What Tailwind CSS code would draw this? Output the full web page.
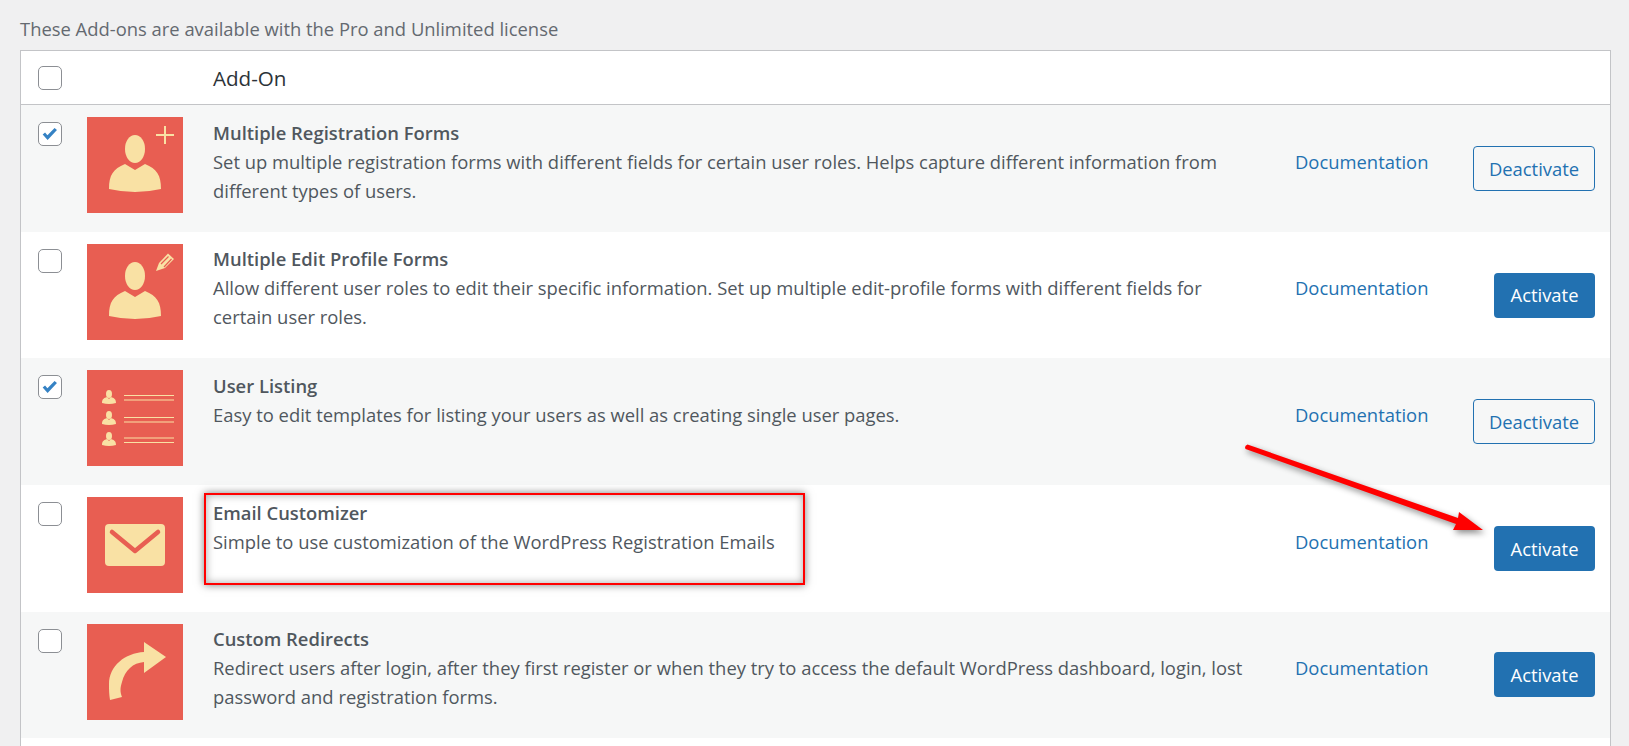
<!DOCTYPE html>
<html lang="en">
<head>
    <meta charset="UTF-8">
    <meta name="viewport" content="width=device-width, initial-scale=1.0">
    <title>Add-Ons</title>
    <script src="https://cdn.jsdelivr.net/npm/@tailwindcss/browser@4"></script>
</head>
<body class="relative h-[746px] overflow-hidden bg-[#f0f0f1] font-['Open_Sans','Noto_Sans',sans-serif] text-[18.4px] text-[#50575e]">
    <!-- Intro -->
    <p class="h-[50px] pl-[20px] pt-[16px] leading-[26px] text-[#646970]">These Add-ons are available with the Pro and Unlimited license</p>

    <!-- Add-ons table -->
    <div class="ml-[20px] mr-[18px] h-[696px] border-x border-t border-[#c3c4c7] bg-white">
        <!-- Header -->
        <div class="flex h-[54px] border-b border-[#c3c4c7]">
            <span class="ml-[17px] mt-[15px] h-6 w-6 rounded-[5px] border border-[#8c8f94] bg-white"></span>
            <span class="ml-[151px] mt-[13px] text-[20.6px] leading-[28px] text-[#2c3338]">Add-On</span>
        </div>

        <!-- Multiple Registration Forms -->
        <div class="flex h-[126.7px] items-start bg-[#f6f7f7]">
            <span class="ml-[17px] mt-[17px] h-6 w-6 shrink-0 rounded-[5px] border border-[#8c8f94] bg-white">
                <svg viewBox="0 0 24 24" class="h-[22px] w-[22px]"><path d="M4 12.5l2.6-2.2 2.6 3L17 5.5l2.6 2L9.4 18.5z" fill="#3582c4"/></svg>
            </span>
            <svg viewBox="0 0 96 96" class="ml-[25px] mt-[12px] h-24 w-24 shrink-0 bg-[#e85e52]">
                <ellipse cx="48" cy="32" rx="10" ry="14" fill="#f9e1a4"/>
                <path d="M22 72C22 58 26 52 38 47L48 53L58 47C70 52 74 58 74 72Q48 78 22 72Z" fill="#f9e1a4"/>
                <path d="M78 9V27M69 18H87" stroke="#f9e1a4" stroke-width="2"/>
            </svg>
            <div class="ml-[30px] mt-[13px] w-[1082px] shrink-0 leading-[29px]">
                <h3 class="font-semibold">Multiple Registration Forms</h3>
                <p>Set up multiple registration forms with different fields for certain user roles. Helps capture different information from<br>different types of users.</p>
            </div>
            <a class="mt-[42px] leading-[29px] text-[#2271b1]">Documentation</a>
            <button class="ml-auto mr-[15px] mt-[41px] h-[45px] w-[122px] rounded border border-[#2271b1] text-[#2271b1]">Deactivate</button>
        </div>

        <!-- Multiple Edit Profile Forms -->
        <div class="flex h-[126.7px] items-start">
            <span class="ml-[17px] mt-[17px] h-6 w-6 shrink-0 rounded-[5px] border border-[#8c8f94] bg-white"></span>
            <svg viewBox="0 0 96 96" class="ml-[25px] mt-[12px] h-24 w-24 shrink-0 bg-[#e85e52]">
                <ellipse cx="48" cy="32" rx="10" ry="14" fill="#f9e1a4"/>
                <path d="M22 72C22 58 26 52 38 47L48 53L58 47C70 52 74 58 74 72Q48 78 22 72Z" fill="#f9e1a4"/>
                <path d="M69 27L72 19L81 9.5L87 15L78 24Z" fill="#f9e1a4"/>
                <path d="M74 20L81.5 12.5M77 23L84.5 15" stroke="#e85e52" stroke-width="1.2"/>
            </svg>
            <div class="ml-[30px] mt-[12.6px] w-[1082px] shrink-0 leading-[29px]">
                <h3 class="font-semibold">Multiple Edit Profile Forms</h3>
                <p>Allow different user roles to edit their specific information. Set up multiple edit-profile forms with different fields for<br>certain user roles.</p>
            </div>
            <a class="mt-[41.6px] leading-[29px] text-[#2271b1]">Documentation</a>
            <button class="ml-auto mr-[15px] mt-[41px] h-[45px] w-[101px] rounded bg-[#2271b1] text-white">Activate</button>
        </div>

        <!-- User Listing -->
        <div class="flex h-[126.7px] items-start bg-[#f6f7f7]">
            <span class="ml-[17px] mt-[17px] h-6 w-6 shrink-0 rounded-[5px] border border-[#8c8f94] bg-white">
                <svg viewBox="0 0 24 24" class="h-[22px] w-[22px]"><path d="M4 12.5l2.6-2.2 2.6 3L17 5.5l2.6 2L9.4 18.5z" fill="#3582c4"/></svg>
            </span>
            <svg viewBox="0 0 96 96" class="ml-[25px] mt-[12px] h-24 w-24 shrink-0 bg-[#e85e52]">
                <g fill="#f9e1a4">
                    <ellipse cx="22" cy="24" rx="3" ry="4"/><path d="M15 33C15 29 17 28 20 27L22 29L24 27C27 28 29 29 29 33Q22 35 15 33Z"/>
                    <ellipse cx="22" cy="45" rx="3" ry="4"/><path d="M15 54C15 50 17 49 20 48L22 50L24 48C27 49 29 50 29 54Q22 56 15 54Z"/>
                    <ellipse cx="22" cy="66" rx="3" ry="4"/><path d="M15 75C15 71 17 70 20 69L22 71L24 69C27 70 29 71 29 75Q22 77 15 75Z"/>
                </g>
                <path d="M37 25.5H87M37 30H87M37 47.5H87M37 52H87M37 68H87M37 72.5H87" stroke="#f9e1a4" stroke-width="1.2"/>
            </svg>
            <div class="ml-[30px] mt-[13px] w-[1082px] shrink-0 leading-[29px]">
                <h3 class="font-semibold">User Listing</h3>
                <p>Easy to edit templates for listing your users as well as creating single user pages.</p>
            </div>
            <a class="mt-[42px] leading-[29px] text-[#2271b1]">Documentation</a>
            <button class="ml-auto mr-[15px] mt-[41px] h-[45px] w-[122px] rounded border border-[#2271b1] text-[#2271b1]">Deactivate</button>
        </div>

        <!-- Email Customizer -->
        <div class="flex h-[126.7px] items-start">
            <span class="ml-[17px] mt-[17px] h-6 w-6 shrink-0 rounded-[5px] border border-[#8c8f94] bg-white"></span>
            <svg viewBox="0 0 96 96" class="ml-[25px] mt-[12px] h-24 w-24 shrink-0 bg-[#e85e52]">
                <rect x="18" y="27" width="60" height="42" rx="4" fill="#f9e1a4"/>
                <path d="M25 35L48 54L71 35" fill="none" stroke="#e85e52" stroke-width="4.5" stroke-linecap="round" stroke-linejoin="round"/>
            </svg>
            <div class="ml-[30px] mt-[13px] w-[1082px] shrink-0 leading-[29px]">
                <h3 class="font-semibold">Email Customizer</h3>
                <p>Simple to use customization of the WordPress Registration Emails</p>
            </div>
            <a class="mt-[41.5px] leading-[29px] text-[#2271b1]">Documentation</a>
            <button class="ml-auto mr-[15px] mt-[41px] h-[45px] w-[101px] rounded bg-[#2271b1] text-white">Activate</button>
        </div>

        <!-- Custom Redirects -->
        <div class="flex h-[126.7px] items-start bg-[#f6f7f7]">
            <span class="ml-[17px] mt-[17px] h-6 w-6 shrink-0 rounded-[5px] border border-[#8c8f94] bg-white"></span>
            <svg viewBox="0 0 96 96" class="ml-[25px] mt-[12px] h-24 w-24 shrink-0 bg-[#e85e52]">
                <path d="M57 28C38 29 22 42 22 60C22 66 22 70 23 76L35 73C33 68 33 64 35 58C38 46 46 39 57 38L57 49L79 33L57 18Z" fill="#f9e1a4"/>
            </svg>
            <div class="ml-[30px] mt-[12.5px] w-[1082px] shrink-0 leading-[29px]">
                <h3 class="font-semibold">Custom Redirects</h3>
                <p>Redirect users after login, after they first register or when they try to access the default WordPress dashboard, login, lost<br>password and registration forms.</p>
            </div>
            <a class="mt-[41.5px] leading-[29px] text-[#2271b1]">Documentation</a>
            <button class="ml-auto mr-[15px] mt-[40.5px] h-[45px] w-[101px] rounded bg-[#2271b1] text-white">Activate</button>
        </div>
    </div>

    <!-- Annotations -->
    <div class="absolute left-[204px] top-[493px] h-[92px] w-[601px] border-[2px] border-[#ff0000] shadow-[0_0_8px_rgba(0,0,0,0.5),inset_0_0_8px_rgba(0,0,0,0.35)]"></div>
    <svg viewBox="0 0 1629 746" class="absolute left-0 top-0 h-[746px] w-[1629px] drop-shadow-[2px_3px_3px_rgba(0,0,0,0.45)]">
        <path d="M1247.5 444.5L1458 518L1459 512L1483 530L1453 530L1456 524L1245.5 449Q1244 446 1247.5 444.5Z" fill="#ff0000"/>
    </svg>
</body>
</html>
